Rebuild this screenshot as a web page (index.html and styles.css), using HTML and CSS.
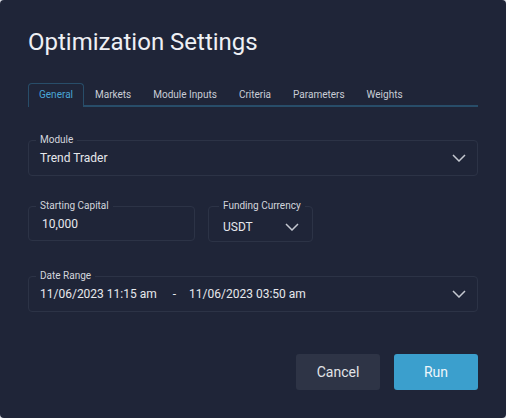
FILE: index.html
```html
<!DOCTYPE html>
<html lang="en">
<head>
    <meta charset="UTF-8">
    <meta name="viewport" content="width=device-width, initial-scale=1.0">
    <title>Optimization Settings</title>

    <link rel="stylesheet" href="styles.css">
</head>
<body>
    <div class="dialog">
        <h1>Optimization Settings</h1>

        <div class="tabs">
            <div class="tab active">General</div>
            <div class="tab">Markets</div>
            <div class="tab">Module Inputs</div>
            <div class="tab">Criteria</div>
            <div class="tab">Parameters</div>
            <div class="tab">Weights</div>
        </div>

        <fieldset class="field field-module">
            <legend>Module</legend>
            <div class="field-value">
                <span>Trend Trader</span>
                <svg class="chevron" width="14" height="8" viewBox="0 0 14 8"><path d="M1 1l6 6 6-6" /></svg>
            </div>
        </fieldset>

        <div class="row">
            <fieldset class="field field-capital">
                <legend>Starting Capital</legend>
                <div class="field-value">
                    <span class="capital">10,000</span>
                </div>
            </fieldset>

            <fieldset class="field field-currency">
                <legend>Funding Currency</legend>
                <div class="field-value">
                    <span>USDT</span>
                    <svg class="chevron" width="14" height="8" viewBox="0 0 14 8"><path d="M1 1l6 6 6-6" /></svg>
                </div>
            </fieldset>
        </div>

        <fieldset class="field field-date">
            <legend>Date Range</legend>
            <div class="field-value">
                <span>11/06/2023 11:15 am<span class="dash">-</span>11/06/2023 03:50 am</span>
                <svg class="chevron" width="14" height="8" viewBox="0 0 14 8"><path d="M1 1l6 6 6-6" /></svg>
            </div>
        </fieldset>

        <div class="actions">
            <button class="button cancel">Cancel</button>
            <button class="button run">Run</button>
        </div>
    </div>
</body>
</html>
```

FILE: styles.css
```css
body {
    font-family: Roboto, "Liberation Sans", sans-serif;
    background-color: #d9dce3;
    margin: 0;
    padding: 0;
}

.dialog {
    background-color: #1f2538;
    border-radius: 4px;
    min-height: 418px;
    box-sizing: border-box;
    padding: 28px 28px 0 28px;
    color: #e4e6eb;
}

h1 {
    margin: 0;
    font-size: 24px;
    font-weight: 400;
    line-height: 28px;
    color: #eef0f4;
}

.tabs {
    display: flex;
    margin-top: 27px;
    border-bottom: 2px solid #284d69;
}

.tab {
    font-size: 10px;
    line-height: 21px;
    padding: 0 10px;
    color: #c9cdd6;
    border: 1px solid transparent;
    border-bottom: none;
}

.tab.active {
    color: #4aa6d6;
    border-color: #284d69;
    border-radius: 4px 4px 0 0;
    background-color: #1f2538;
    margin-bottom: -2px;
    padding-bottom: 2px;
}

.field {
    margin: 0;
    padding: 0 11px;
    border: 1px solid #2c3346;
    border-radius: 4px;
    min-width: 0;
}

.field legend {
    font-size: 10px;
    line-height: 12px;
    padding: 0 4px;
    margin-left: -4px;
    white-space: nowrap;
    color: #d3d6dd;
}

.field-value {
    display: flex;
    align-items: center;
    justify-content: space-between;
    box-sizing: border-box;
    height: 29px;
    padding-bottom: 5px;
    font-size: 12px;
    color: #e6e8ec;
}

.field-module {
    margin-top: 27px;
}

.row {
    display: flex;
    align-items: flex-start;
    gap: 13px;
    margin-top: 24px;
}

.field-capital {
    width: 167px;
    box-sizing: border-box;
}

.field-capital .field-value {
    height: 28px;
}

.capital {
    padding-left: 2px;
}

.field-currency {
    width: 105px;
    box-sizing: border-box;
    padding: 0 13px 0 14px;
}

.field-currency .field-value {
    padding: 1px 0 0 0;
}

.field-date {
    margin-top: 28px;
}

.dash {
    margin: 0 13px 0 16px;
}

.chevron {
    fill: none;
    stroke: #c4c8d0;
    stroke-width: 1.5;
}

.actions {
    display: flex;
    justify-content: flex-end;
    gap: 14px;
    margin-top: 42px;
}

.button {
    width: 84px;
    height: 36px;
    border: none;
    border-radius: 3px;
    font-family: Roboto, "Liberation Sans", sans-serif;
    font-size: 14px;
    cursor: pointer;
}

.cancel {
    background-color: #2e3446;
    color: #e2e4e8;
}

.run {
    background-color: #3b9fcd;
    color: #eef6fb;
}
```
